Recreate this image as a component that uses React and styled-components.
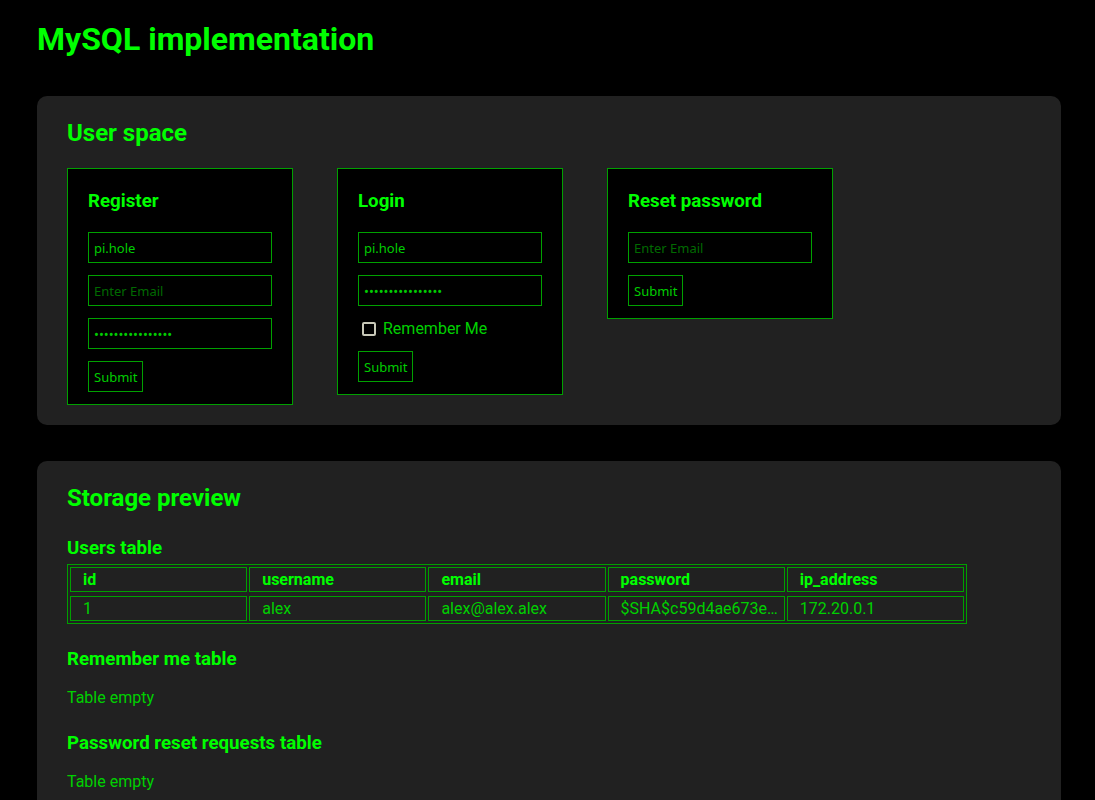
import React from "react";
import styled, { createGlobalStyle } from "styled-components";

const GlobalStyle = createGlobalStyle`
  html, body {
    margin: 0;
    padding: 0;
    background-color: #000;
    font-family: Roboto, "Liberation Sans", sans-serif;
  }
  * {
    box-sizing: border-box;
  }
`;

const Page = styled.div`
  width: 1024px;
  margin-left: 37px;
  padding: 20px 0 40px;
`;

const Title = styled.h1`
  margin: 0 0 38px;
  font-size: 32px;
  line-height: 38px;
  font-weight: 700;
  color: #0f0;
`;

const Card = styled.section`
  background-color: #212121;
  border-radius: 10px;
  padding: 23px 30px ${props => props.$bottom || "20px"};
  margin-bottom: 36px;
`;

const CardTitle = styled.h2`
  margin: 0;
  font-size: 24px;
  line-height: 28px;
  font-weight: 700;
  color: #0f0;
`;

const FormRow = styled.div`
  display: flex;
  align-items: flex-start;
  gap: 44px;
  margin-top: 21px;
`;

const FormBox = styled.form`
  width: 226px;
  display: flex;
  flex-direction: column;
  align-items: flex-start;
  background-color: #000;
  border: 1px solid #00a000;
  padding: 21px 20px 12px;
`;

const FormTitle = styled.h3`
  margin: 0 0 20px;
  font-size: 18.72px;
  line-height: 22px;
  font-weight: 700;
  color: #0f0;
`;

const Input = styled.input`
  width: 184px;
  height: 31px;
  margin: 0 0 12px;
  padding: 0 5px;
  background-color: #000;
  border: 1px solid #00a000;
  border-radius: 0;
  outline: none;
  font-family: "Noto Sans", "Open Sans", sans-serif;
  font-size: 13px;
  color: #00cc00;
  &::placeholder {
    color: #006a00;
    opacity: 1;
  }
`;

const CheckRow = styled.label`
  display: flex;
  align-items: center;
  height: 21px;
  margin-bottom: 12px;
  font-size: 16px;
  color: #00d000;
`;

const Check = styled.input`
  appearance: none;
  width: 14px;
  height: 14px;
  margin: 0 7px 0 4px;
  background-color: #000;
  border: 2px solid #c8c8b8;
  border-radius: 2px;
`;

const Button = styled.button`
  height: 31px;
  padding: 0 5px;
  background-color: #000;
  border: 1px solid #00a000;
  border-radius: 0;
  font-family: "Noto Sans", "Open Sans", sans-serif;
  font-size: 13px;
  color: #00cc00;
`;

const SubTitle = styled.h3`
  margin: ${props => (props.$first ? "25px" : "24px")} 0 5px;
  font-size: 18.72px;
  line-height: 22px;
  font-weight: 700;
  color: #0f0;
`;

const TableFrame = styled.div`
  width: 900px;
  border: 1px solid #00a000;
`;

const Table = styled.table`
  width: 100%;
  margin: -2px 0;
  table-layout: fixed;
  border-spacing: 2px 4px;
  font-size: 16px;
  line-height: 19px;
  th,
  td {
    border: 1px solid #00a000;
    padding: 2px 2px 2px 12px;
    text-align: left;
    white-space: nowrap;
    overflow: hidden;
    text-overflow: ellipsis;
  }
  th {
    font-weight: 700;
    color: #0f0;
  }
  td {
    font-weight: 400;
    color: #00d000;
  }
`;

const Empty = styled.p`
  margin: 18px 0 0;
  font-size: 16px;
  line-height: 20px;
  color: #00d000;
`;

const columns = ["id", "username", "email", "password", "ip_address"];
const users = [
  {
    id: 1,
    username: "alex",
    email: "alex@alex.alex",
    password: "$SHA$c59d4ae673e1b2f0$8a4c9e0d7f31b65e2a9c",
    ip_address: "172.20.0.1",
  },
];

const App = () => {
  return (
    <Page>
      <GlobalStyle />
      <Title>MySQL implementation</Title>

      <Card>
        <CardTitle>User space</CardTitle>
        <FormRow>
          <FormBox onSubmit={e => e.preventDefault()}>
            <FormTitle>Register</FormTitle>
            <Input defaultValue="pi.hole" placeholder="Enter Username" />
            <Input placeholder="Enter Email" />
            <Input type="password" defaultValue="piholepassword12" />
            <Button>Submit</Button>
          </FormBox>

          <FormBox onSubmit={e => e.preventDefault()}>
            <FormTitle>Login</FormTitle>
            <Input defaultValue="pi.hole" placeholder="Enter Username" />
            <Input type="password" defaultValue="piholepassword12" />
            <CheckRow>
              <Check type="checkbox" />
              Remember Me
            </CheckRow>
            <Button>Submit</Button>
          </FormBox>

          <FormBox onSubmit={e => e.preventDefault()}>
            <FormTitle>Reset password</FormTitle>
            <Input placeholder="Enter Email" />
            <Button>Submit</Button>
          </FormBox>
        </FormRow>
      </Card>

      <Card $bottom="30px">
        <CardTitle>Storage preview</CardTitle>

        <SubTitle $first>Users table</SubTitle>
        <TableFrame>
          <Table>
            <thead>
              <tr>
                {columns.map(col => (
                  <th key={col}>{col}</th>
                ))}
              </tr>
            </thead>
            <tbody>
              {users.map(user => (
                <tr key={user.id}>
                  {columns.map(col => (
                    <td key={col}>{user[col]}</td>
                  ))}
                </tr>
              ))}
            </tbody>
          </Table>
        </TableFrame>

        <SubTitle>Remember me table</SubTitle>
        <Empty>Table empty</Empty>

        <SubTitle>Password reset requests table</SubTitle>
        <Empty>Table empty</Empty>
      </Card>
    </Page>
  );
};

export default App;
